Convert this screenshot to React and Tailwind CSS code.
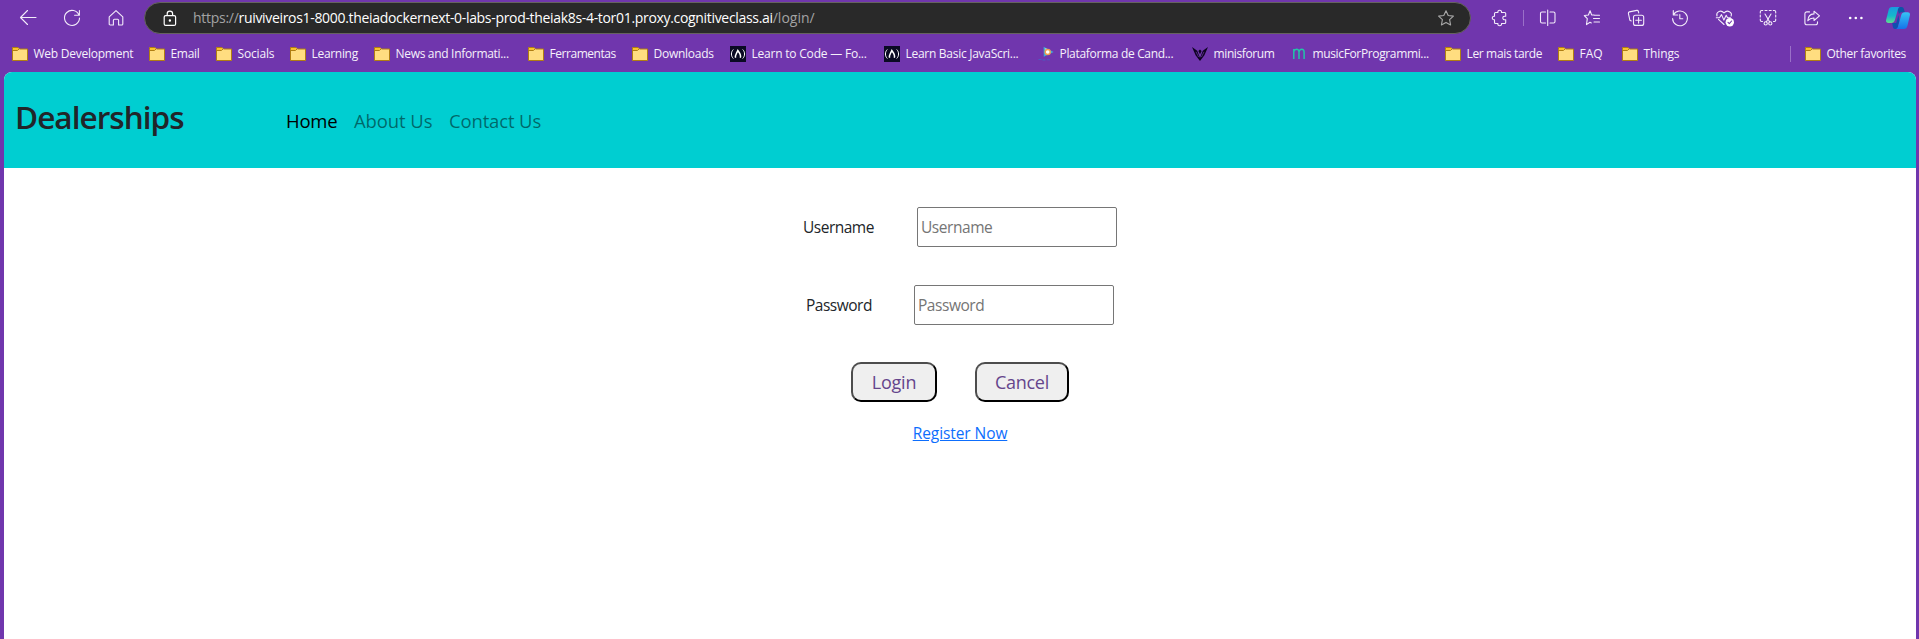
const FolderIcon = () => (
  <svg width="16" height="16" viewBox="0 0 16 16" fill="none">
    <path d="M.5 3.500V1.500h5.500l1.500 1.500h8v11.500H.5z" fill="#ffdd80" stroke="#b07e12" strokeLinejoin="round" />
    <path d="M1 4V2h4.800l1 1L5.500 4z" fill="#f9c22e" />
    <path d="M1 4.500h4.500l1.500-1.500" stroke="#b07e12" />
  </svg>
)

const CodeCampIcon = () => (
  <svg width="16" height="16" viewBox="0 0 16 16" fill="none">
    <rect width="16" height="16" fill="#0a0a23" />
    <path d="M3.300 3.500C.8 6 .8 10 3.300 12.500M12.700 3.500c2.500 2.500 2.500 6.500 0 9" stroke="#fff" strokeWidth="1" />
    <path d="M5.600 11.800c-.9-2.800 1-4.400 2.200-7.300 1.700 2.300 3.600 4.300 2.500 7.300" stroke="#fff" strokeWidth="1.500" />
  </svg>
)

const PlataformaIcon = () => (
  <svg width="16" height="16" viewBox="0 0 16 16" fill="none">
    <path d="M5.600.8l10 5.200-9.800 4.800z" fill="#3fa9d6" />
    <path d="M6.800 1.800l5.500 2.700-2.500.6-2.800 1z" fill="#8fd8c8" />
    <circle cx="9.700" cy="6" r="2.500" fill="#fff" stroke="#f0a050" strokeWidth="1.400" />
    <path d="M.5 13.500h3M4.500 14h3M9 13.800h3" stroke="#4a5cc0" />
  </svg>
)

const MinisforumIcon = () => (
  <svg width="16" height="16" viewBox="0 0 16 16" fill="#0d0420">
    <path d="M0 1l5.200 3.700L8 12l2.800-7.300L16 1l-3.600 8.200L8 15 3.600 9.200z" />
    <path d="M8 3.500l1.600 1.600L8 8.200 6.400 5.100z" />
    <path d="M4 5.800l2.600 5.200M12 5.800L9.400 11" stroke="#7036ad" strokeWidth=".7" />
  </svg>
)

const MusicIcon = () => (
  <svg width="16" height="16" viewBox="0 0 16 16" fill="none" stroke="#22c4a8" strokeWidth="1.500">
    <path d="M2.800 13V3M2.800 5.500C3.300 3.900 4.300 3.300 5.500 3.300c1.700 0 2.500 1 2.500 2.800V13M8 5.800c.5-1.700 1.500-2.500 2.700-2.500 1.600 0 2.400 1 2.400 2.800V13" />
  </svg>
)

const bookmarks = [
  { label: 'Web Development', Icon: FolderIcon, box: 'w-[137px]', text: 'tracking-[-0.25px]' },
  { label: 'Email', Icon: FolderIcon, box: 'w-[67px]', text: 'tracking-[-0.3px]' },
  { label: 'Socials', Icon: FolderIcon, box: 'w-[74px]', text: 'tracking-[-0.15px]' },
  { label: 'Learning', Icon: FolderIcon, box: 'w-[84px]', text: 'tracking-[-0.31px]' },
  { label: 'News and Informati...', Icon: FolderIcon, box: 'w-[154px]', text: 'tracking-[-0.31px]' },
  { label: 'Ferramentas', Icon: FolderIcon, box: 'w-[104px]', text: 'tracking-[-0.45px]' },
  { label: 'Downloads', Icon: FolderIcon, box: 'w-[98px]', text: 'tracking-[-0.26px]' },
  { label: 'Learn to Code — Fo...', Icon: CodeCampIcon, box: 'w-[154px]', text: 'tracking-[-0.21px]' },
  { label: 'Learn Basic JavaScri...', Icon: CodeCampIcon, box: 'w-[154px]', text: 'tracking-[-0.28px]' },
  { label: 'Plataforma de Cand...', Icon: PlataformaIcon, box: 'w-[154px]', text: 'tracking-[-0.32px]' },
  { label: 'minisforum', Icon: MinisforumIcon, box: 'w-[99px]', text: 'tracking-[-0.38px]' },
  { label: 'musicForProgrammi...', Icon: MusicIcon, box: 'w-[154px]', text: 'tracking-[-0.36px]' },
  { label: 'Ler mais tarde', Icon: FolderIcon, box: 'w-[113px]', text: 'tracking-[-0.35px]' },
  { label: 'FAQ', Icon: FolderIcon, box: 'w-[64px]', text: 'tracking-normal' },
  { label: 'Things', Icon: FolderIcon, box: 'w-[80px]', text: 'tracking-[-0.1px]' },
]

const Bookmark = ({ label, Icon, box, text }) => (
  <div className={`flex shrink-0 items-center gap-[5.5px] ${box}`}>
    <Icon />
    <span className={`whitespace-nowrap text-xs leading-4 ${text}`}>{label}</span>
  </div>
)

const ToolButton = ({ label, children }) => (
  <button aria-label={label} className="flex h-9 w-11 shrink-0 items-center justify-center">
    <svg width="18" height="18" viewBox="-1 -1 18 18" fill="none" stroke="#f3ecfa" strokeWidth="1.100" strokeLinecap="round" strokeLinejoin="round" className="overflow-visible">
      {children}
    </svg>
  </button>
)

const AddressBar = () => (
  <div className="mt-0.5 ml-1.5 flex h-8 w-[1327px] shrink-0 items-center rounded-full border border-[#66625f] bg-[#292929] pr-4 pl-[18px]">
    <svg width="14" height="17" viewBox="0 0 14 17" fill="none" stroke="#fff" strokeWidth="1.200">
      <rect x="1.200" y="5.600" width="11.400" height="9.800" rx="1.500" />
      <path d="M4.200 5.600V3.800a2.700 2.700 0 0 1 5.400 0v1.800" />
      <circle cx="6.900" cy="10.500" r=".6" fill="#fff" />
    </svg>
    <div className="ml-[16px] flex whitespace-nowrap text-sm leading-5">
      <span className="tracking-[-0.28px] text-[#a3a3a3]">https://</span>
      <span className="tracking-[-0.32px] text-white">ruiviveiros1-8000.theiadockernext-0-labs-prod-theiak8s-4-tor01.proxy.cognitiveclass.ai</span>
      <span className="text-[#a3a3a3]">/login/</span>
    </div>
    <svg width="16" height="16" viewBox="0 0 16 16" fill="none" stroke="#a8a8a8" strokeWidth="1.100" strokeLinejoin="round" className="ml-auto">
      <path d="M8 .8l2.200 4.700 5.200.6-3.800 3.600 1 5.200L8 12.400l-4.600 2.500 1-5.200L.6 6.100l5.200-.6z" />
    </svg>
  </div>
)

const Toolbar = () => (
  <div className="flex h-9 pl-1.5">
    <ToolButton label="Back">
      <path d="M16 7.500H.5M7.500.5l-7 7 7 7" />
    </ToolButton>
    <ToolButton label="Refresh">
      <path d="M15 5.200A7.500 7.500 0 1 0 15.500 8M15.400.5v4.800h-4.800" />
    </ToolButton>
    <ToolButton label="Home">
      <path d="M1.200 6.800L8 .6l6.800 6.200v7.100c0 .7-.4 1.100-1.100 1.100h-3.100V10.200c0-.6-.4-1-1-1H6.400c-.6 0-1 .4-1 1V15H2.300c-.7 0-1.100-.4-1.100-1.100z" />
    </ToolButton>
    <AddressBar />
    <div className="w-[7px] shrink-0" />
    <ToolButton label="Extensions">
      <path d="M3.500 2.500h2.400c-.3-1.300.5-2.200 1.800-2.200s2.100.9 1.800 2.200h3.200c.6 0 1 .4 1 1v2.800c-1.900-.4-2.900.5-2.900 1.700s1 2.100 2.900 1.700v2.800c0 .6-.4 1-1 1H9.500c.3 1.300-.5 2.200-1.800 2.200s-2.100-.9-1.800-2.200H3.500c-.6 0-1-.4-1-1V9.700C1.200 10 .3 9.200.3 8s.9-2 2.200-1.700V3.500c0-.6.4-1 1-1z" />
    </ToolButton>
    <div className="flex w-1 shrink-0 items-center pl-px">
      <div className="h-4 w-px bg-[#9a70c8]" />
    </div>
    <ToolButton label="Split screen">
      <path d="M5.500 2H2C1.100 2 .5 2.600.5 3.500v8c0 .9.600 1.500 1.500 1.500h3.500M10 2h3.500c.9 0 1.500.6 1.500 1.500v8c0 .9-.6 1.500-1.500 1.500H10M7.700 0v15.500" />
    </ToolButton>
    <ToolButton label="Favorites">
      <path d="M10.200 5L7.600 4.900 6.100.8 4.400 5 .3 5.500l3 3.100-.8 6L6 12.200l1.300.8M10.200 5.200H15.500M9.500 8.500h6M10 12h5.500" />
    </ToolButton>
    <ToolButton label="Collections">
      <rect x="5.500" y="5.200" width="10.200" height="10.200" rx="2" />
      <path d="M10.600 7.500v5.600M7.800 10.300h5.600M3.300 10.900L1.900 10.300.4 3.500c-.1-.9.200-1.400 1-1.600L8.800.4c.8-.1 1.400.2 1.600 1l.3 1.500" />
    </ToolButton>
    <ToolButton label="History">
      <path d="M1.400 5A7.400 7.400 0 1 1 .6 8.500M1.300.6V5h4.400M7.800 4.600v4.100h3" />
    </ToolButton>
    <ToolButton label="Browser essentials">
      <path d="M1 6C-.2 2.300 4.500-.9 8 2.900c3.500-3.800 8.600-.6 7.100 3.100M2.500 9.300l5.500 5.200M.3 7.800h3.200l2-3.200 2.400 5.500 2.300-4.800 1.300 2.500h3" />
      <circle cx="13.800" cy="12.200" r="4.200" fill="#fff" stroke="none" />
      <path d="M12 12.300l1.300 1.300 2.300-2.600" stroke="#7036ad" />
    </ToolButton>
    <ToolButton label="Screenshot">
      <path d="M.3 3V1.800C.3 1 .8.500 1.600.500h1.200M5 .5h2M9.200.5h2M13.300.5h1.100c.8 0 1.300.5 1.300 1.300V3M15.700 5v2M15.700 9v1.300c0 .7-.5 1.200-1.300 1.200h-.9M.3 5v2M.3 9v1.300c0 .7.500 1.200 1.300 1.200h.9M5 4l4.700 8M11 4l-4.700 8" />
      <circle cx="5.700" cy="13.400" r="1.600" />
      <circle cx="10.300" cy="13.400" r="1.600" />
    </ToolButton>
    <ToolButton label="Share">
      <path d="M5.500 1.900H3C1.700 1.900.9 2.700.9 4v8.700c0 1.300.8 2.100 2.100 2.100h8.400c1.300 0 2.100-.8 2.100-2.100v-1M10 1.200l5.500 4.700L10 10.500V8c-2.800-.1-4.600.7-6.200 2.700C4 6.500 6.200 4.100 10 3.900z" />
    </ToolButton>
    <ToolButton label="More">
      <g fill="#fff" stroke="none">
        <circle cx="2.200" cy="8" r="1.300" />
        <circle cx="7.800" cy="8" r="1.300" />
        <circle cx="13.400" cy="8" r="1.300" />
      </g>
    </ToolButton>
    <div className="flex h-9 w-10 shrink-0 items-center justify-center">
      <svg width="24" height="22" viewBox="0 0 24 22">
        <defs>
          <linearGradient id="cpLeft" x1="0" y1="0" x2="0" y2="1">
            <stop offset="0" stopColor="#1a9be0" />
            <stop offset=".55" stopColor="#14b8cc" />
            <stop offset="1" stopColor="#62dd8e" />
          </linearGradient>
          <linearGradient id="cpRight" x1="0" y1="0" x2="0" y2="1">
            <stop offset="0" stopColor="#35c4f5" />
            <stop offset="1" stopColor="#1672ea" />
          </linearGradient>
        </defs>
        <path d="M11 0h4.500c1.400 0 2 .8 2.400 2l.9 3.300h-3.500c-1.200 0-1.900.7-2.300 2z" fill="#0d55a8" />
        <path d="M6.200 16h4l2.300-8 .8 6-2 8H9c-1.200 0-1.800-.8-2.100-2z" fill="#0f4fb0" />
        <path d="M6 0h8c-1.300.3-1.800 1.300-2.200 2.700L8.900 13c-.6 2-1.700 3-3.700 3H2.400C.6 16-.3 14.700.1 13L2.600 3C3.100 1.100 4.200 0 6 0z" fill="url(#cpLeft)" />
        <path d="M18 22h-8c1.300-.3 1.800-1.300 2.200-2.700L15.100 8.500c.6-2 1.700-3.200 3.700-3.200h2.800c1.800 0 2.700 1.300 2.300 3L21.400 19c-.5 1.900-1.600 3-3.400 3z" fill="url(#cpRight)" />
      </svg>
    </div>
  </div>
)

const BookmarksBar = () => (
  <div className="flex h-9 items-center pl-3 text-[#f6f1fb]">
    {bookmarks.map((b) => (
      <Bookmark key={b.label} {...b} />
    ))}
    <div className="mr-3.5 ml-auto h-4 w-px bg-[#9a70c8]" />
    <Bookmark label="Other favorites" Icon={FolderIcon} box="w-[114px]" text="tracking-[-0.32px]" />
  </div>
)

const Field = ({ label, type, labelBox }) => (
  <div className="flex items-center">
    <label htmlFor={type} className={`text-[15.5px] leading-6 tracking-[-0.5px] text-[#212529] ${labelBox}`}>{label}</label>
    <input
      id={type}
      type={type}
      placeholder={label}
      className="h-10 w-[200px] rounded-[2px] border border-[#767676] bg-white pr-0.5 pl-[3px] text-[15.5px] tracking-[-0.45px] placeholder:text-[#757575]"
    />
  </div>
)

const buttonClass = 'h-10 rounded-[10px] border-2 border-t-[#4d4d4d] border-l-[#4d4d4d] border-r-black border-b-black bg-[#efefef] text-[18px] leading-6 text-[#65458c]'

export default function App() {
  return (
    <div className="flex h-[639px] w-[1919px] flex-col overflow-hidden bg-[#7036ad] font-['Open_Sans','Noto_Sans',sans-serif]">
      <Toolbar />
      <BookmarksBar />
      <div className="mr-[3px] ml-1 flex grow flex-col overflow-hidden rounded-t-lg bg-white">
        <header className="flex h-24 shrink-0 bg-[#00ced1] pl-[11px]">
          <h1 className="w-[271px] pt-[25px] text-[31.5px] leading-10 font-semibold tracking-[-0.95px] text-[#212529]">Dealerships</h1>
          <nav className="flex pt-[35px] text-[18.5px] leading-7">
            <a className="w-[68px] tracking-[-0.25px] text-black">Home</a>
            <a className="w-[95px] tracking-[-0.1px] text-black/50">About Us</a>
            <a className="tracking-[-0.15px] text-black/50">Contact Us</a>
          </nav>
        </header>
        <main className="flex flex-col items-center pt-[39px]">
          <Field label="Username" type="text" labelBox="w-[114px]" />
          <div className="h-[38px]" />
          <Field label="Password" type="password" labelBox="w-[108px]" />
          <div className="mt-[37px] flex gap-[38px]">
            <button className={`w-[86px] tracking-[-0.2px] ${buttonClass}`}>Login</button>
            <button className={`w-[94px] tracking-[-0.3px] ${buttonClass}`}>Cancel</button>
          </div>
          <a className="mt-[19px] text-[15.5px] leading-6 tracking-[-0.08px] text-[#0d6efd] underline">Register Now</a>
        </main>
      </div>
    </div>
  )
}
